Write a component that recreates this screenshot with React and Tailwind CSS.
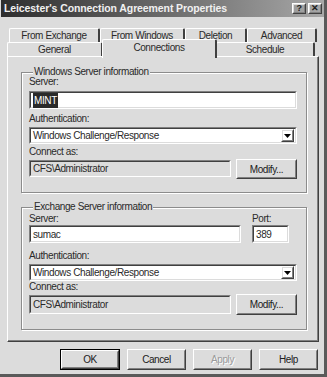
import { useState } from 'react'

function Raised({ className = '', children, isDefault = false, disabled = false }) {
  return (
    <div className={`${isDefault ? 'border border-black' : ''} ${className}`}>
      <div className="h-full border border-t-white border-l-white border-b-[#404040] border-r-[#404040]">
        <div
          className={`h-full flex items-center justify-center border border-t-[#dcdcdc] border-l-[#dcdcdc] border-b-[#808080] border-r-[#808080] ${
            disabled ? 'text-[#9a9a9a] [text-shadow:1px_1px_0_#fff]' : 'text-[#202020]'
          }`}
        >
          {children}
        </div>
      </div>
    </div>
  )
}

function Sunken({ className = '', children, readOnly = false }) {
  return (
    <div className={`border border-t-[#808080] border-l-[#808080] border-b-white border-r-white ${className}`}>
      <div
        className={`h-full flex items-center border border-t-[#404040] border-l-[#404040] border-b-[#dcdcdc] border-r-[#dcdcdc] ${
          readOnly ? 'bg-[#dcdcdc]' : 'bg-white'
        }`}
      >
        {children}
      </div>
    </div>
  )
}

function Combo({ value }) {
  return (
    <Sunken className="h-[17px]">
      <span className="flex-1 pl-[2px]">{value}</span>
      <Raised className="w-[13px] h-[13px] mr-[1px]">
        <svg width="7" height="4" viewBox="0 0 7 4">
          <path d="M0 0h7L3.5 4z" fill="#000" />
        </svg>
      </Raised>
    </Sunken>
  )
}

function Label({ children, className = '' }) {
  return <div className={`h-[12px] leading-[12px] ${className}`}>{children}</div>
}

function Group({ title, children, className = '' }) {
  return (
    <fieldset
      className={`border border-[#8c8c8c] shadow-[inset_1px_1px_0_#fff,1px_1px_0_#fff] pl-[7px] pr-[9px] ${className}`}
    >
      <legend className="ml-[4px] px-[1px] bg-[#dcdcdc] leading-[12px]">{title}</legend>
      {children}
    </fieldset>
  )
}

function Tab({ label, width, selected = false }) {
  return (
    <div
      style={{ width }}
      className={`flex items-center justify-center rounded-t-[2px] border-t border-l border-t-white border-l-white border-r-2 border-r-[#404040] bg-[#dcdcdc] ${
        selected ? 'relative z-10 -mt-[3px] -mb-[2px] h-[19px] pb-[3px] -mx-[1px]' : 'h-[14px]'
      }`}
    >
      {label}
    </div>
  )
}

export default function App() {
  const [tab] = useState('Connections')

  return (
    <div className="w-[327px] h-[377px] bg-[#dcdcdc] font-['Liberation_Sans',Arial,sans-serif] text-[10px] tracking-[-0.4px] text-[#2a2a2a] border-r-[3px] border-b-[3px] border-r-[#5a5a5a] border-b-[#5a5a5a] pl-[1px] flex flex-col">
      {/* title bar */}
      <div className="h-[17px] flex items-center justify-between pl-[3px] pr-[2px] bg-gradient-to-r from-[#2e2e2e] via-[#6a6a6a] to-[#a8a8a8]">
        <span className="text-[10.5px] font-bold text-[#f0f0f0] tracking-[-0.1px]">
          Leicester's Connection Agreement Properties
        </span>
        <div className="flex gap-[2px]">
          <Raised className="w-[14px] h-[11px]">
            <span className="text-[9px] font-bold leading-none">?</span>
          </Raised>
          <Raised className="w-[14px] h-[11px]">
            <span className="text-[9px] font-bold leading-none">✕</span>
          </Raised>
        </div>
      </div>

      {/* tabs */}
      <div className="mt-[11px] flex pl-[8px]">
        <Tab label="From Exchange" width={91} />
        <Tab label="From Windows" width={85} />
        <Tab label="Deletion" width={62} />
        <Tab label="Advanced" width={70} />
      </div>
      <div className="flex pl-[6px]">
        <Tab label="General" width={96} />
        <Tab label="Connections" width={115} selected={tab === 'Connections'} />
        <Tab label="Schedule" width={99} />
      </div>

      {/* panel */}
      <div className="ml-[6px] w-[312px] h-[286px] border-t border-l border-white border-r border-b border-r-[#404040] border-b-[#404040]">
        <div className="h-full border-r border-b border-r-[#808080] border-b-[#808080] pl-[13px] pr-[10px] pt-[9px]">
          <Group title="Windows Server information" className="h-[127px]">
            <Label className="-mt-[2px]">Server:</Label>
            <Sunken className="mt-[3px] h-[18px]">
              <span className="ml-[2px] px-[1px] bg-[#2a2a2a] text-white">MINT</span>
            </Sunken>
            <Label className="mt-[4px]">Authentication:</Label>
            <div className="mt-[2px]">
              <Combo value="Windows Challenge/Response" />
            </div>
            <Label className="mt-[2px]">Connect as:</Label>
            <div className="mt-[1px] flex gap-[5px]">
              <Sunken readOnly className="w-[202px] h-[17px] mt-[1px]">
                <span className="pl-[2px]">CFS\Administrator</span>
              </Sunken>
              <Raised className="flex-1 h-[20px]">Modify...</Raised>
            </div>
          </Group>

          <Group title="Exchange Server information" className="mt-[8px] h-[129px]">
            <div className="flex gap-[11px]">
              <div className="w-[212px]">
                <Label>Server:</Label>
                <Sunken className="h-[18px]">
                  <span className="pl-[2px]">sumac</span>
                </Sunken>
              </div>
              <div className="w-[37px]">
                <Label>Port:</Label>
                <Sunken className="h-[18px]">
                  <span className="pl-[2px]">389</span>
                </Sunken>
              </div>
            </div>
            <Label className="mt-[7px]">Authentication:</Label>
            <div className="mt-[2px]">
              <Combo value="Windows Challenge/Response" />
            </div>
            <Label>Connect as:</Label>
            <div className="mt-[1px] flex gap-[5px]">
              <Sunken readOnly className="w-[202px] h-[19px] mt-[1px]">
                <span className="pl-[2px]">CFS\Administrator</span>
              </Sunken>
              <Raised className="flex-1 h-[21px]">Modify...</Raised>
            </div>
          </Group>
        </div>
      </div>

      {/* dialog buttons */}
      <div className="mt-[7px] flex justify-end gap-[7px] pr-[6px]">
        <Raised isDefault className="w-[60px] h-[21px]">OK</Raised>
        <Raised className="w-[59px] h-[21px]">Cancel</Raised>
        <Raised disabled className="w-[59px] h-[21px]">Apply</Raised>
        <Raised className="w-[59px] h-[21px]">Help</Raised>
      </div>
    </div>
  )
}
